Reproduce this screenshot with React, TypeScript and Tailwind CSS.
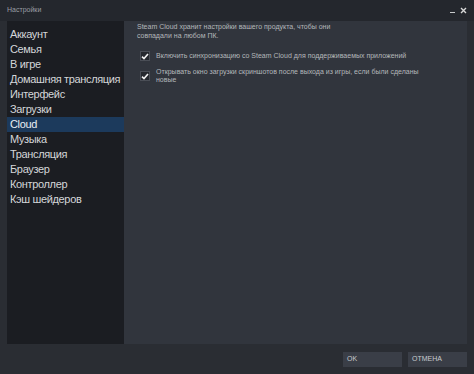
import React from "react";

const items = [
  "Аккаунт",
  "Семья",
  "В игре",
  "Домашняя трансляция",
  "Интерфейс",
  "Загрузки",
  "Cloud",
  "Музыка",
  "Трансляция",
  "Браузер",
  "Контроллер",
  "Кэш шейдеров",
];

const Check = () => (
  <div className="w-[10px] h-[10px] shrink-0 bg-[#25282e] border border-[#4a4e56] flex items-center justify-center">
    <svg width="8" height="7" viewBox="0 0 8 7">
      <path d="M1 3.6 L3 5.6 L7 1" stroke="#f0f0f0" strokeWidth="1.6" fill="none" />
    </svg>
  </div>
);

export default function App() {
  return (
    <div
      className="w-[474px] h-[374px] bg-[#2a2d33] flex flex-col overflow-hidden"
      style={{ fontFamily: '"Liberation Sans", Arial, sans-serif' }}
    >
      {/* title bar */}
      <div className="h-[21px] bg-[#24272d] flex items-center px-[7px] shrink-0">
        <span className="text-[7px] text-[#9a9ea4]">Настройки</span>
        <div className="ml-auto flex items-center gap-[5px] text-[#c8cacc]">
          <span className="w-[5px] h-[1px] bg-[#c8cacc] mt-[3px]" />
          <svg width="7" height="7" viewBox="0 0 7 7">
            <path d="M1 1 L6 6 M6 1 L1 6" stroke="#d8d8d8" strokeWidth="1.4" />
          </svg>
        </div>
      </div>

      <div className="flex flex-1 pl-[7px] pr-[7px]">
        {/* sidebar */}
        <div className="w-[117px] bg-[#1b1d22] pt-[6px] flex flex-col h-[323px]">
          {items.map((it) => (
            <div
              key={it}
              className={
                "h-[15px] flex items-center pl-[3px] text-[11px] leading-none whitespace-nowrap tracking-[-0.35px] " +
                (it === "Cloud" ? "bg-[#1c3a5c] text-[#e8eef4]" : "text-[#d4d6d9]")
              }
            >
              {it}
            </div>
          ))}
        </div>

        {/* content */}
        <div className="flex-1 bg-[#31353d] h-[323px] pl-[13px] pt-[1px] text-[#b4b7bb]">
          <p className="text-[7px] leading-[9px] w-[220px]">
            Steam Cloud хранит настройки вашего продукта, чтобы они совпадали на любом ПК.
          </p>
          <div className="mt-[11px] flex items-center gap-[6px] pl-[3px]">
            <Check />
            <span className="text-[7px] leading-[8px]">
              Включить синхронизацию со Steam Cloud для поддерживаемых приложений
            </span>
          </div>
          <div className="mt-[7px] flex items-start gap-[6px] pl-[3px]">
            <div className="mt-[3px]">
              <Check />
            </div>
            <span className="text-[7px] leading-[8px] w-[270px]">
              Открывать окно загрузки скриншотов после выхода из игры, если были сделаны новые
            </span>
          </div>
        </div>
      </div>

      {/* bottom bar */}
      <div className="h-[30px] flex items-center justify-end gap-[6px] pr-[7px] shrink-0">
        <button className="w-[59px] h-[15px] bg-[#3a3e47] text-[7px] text-[#c8cbcf] text-left pl-[4px]">
          OK
        </button>
        <button className="w-[59px] h-[15px] bg-[#3a3e47] text-[7px] text-[#c8cbcf] text-left pl-[4px]">
          ОТМЕНА
        </button>
      </div>
    </div>
  );
}
